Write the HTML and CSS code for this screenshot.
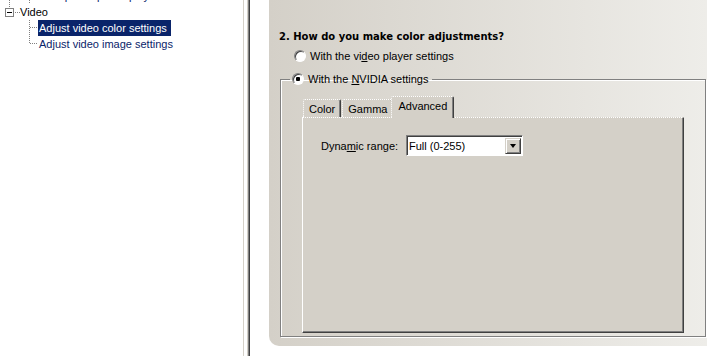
FILE: index.html
```html
<!DOCTYPE html>
<html lang="en">
<head>
    <meta charset="UTF-8">
    <title>NVIDIA Control Panel - Adjust video color settings</title>
    <link rel="stylesheet" href="styles.css">
</head>
<body>
    <div class="window">
        <!-- task tree on the left -->
        <div class="tree">
            <div class="tree-row">
                <span class="gutter"></span>
                <span class="branch"></span>
                <span class="tree-label">Set up multiple displays</span>
            </div>
            <div class="tree-row">
                <span class="expander"><span class="box"></span></span>
                <span class="tree-label root">Video</span>
            </div>
            <div class="tree-row child">
                <span class="branch"></span>
                <span class="tree-label selected">Adjust video color settings</span>
            </div>
            <div class="tree-row child">
                <span class="branch last"></span>
                <span class="tree-label">Adjust video image settings</span>
            </div>
        </div>

        <div class="splitter"></div>

        <!-- page content -->
        <div class="content">
            <div class="panel">
                <h2>2. How do you make color adjustments?</h2>
                <label class="radio first">
                    <span class="radio-box"></span>
                    <span>With the vi<u>d</u>eo player settings</span>
                </label>
                <fieldset class="group">
                    <legend>
                        <label class="radio">
                            <span class="radio-box checked"></span>
                            <span>With the <u>N</u>VIDIA settings</span>
                        </label>
                    </legend>
                    <div class="tabs">
                        <div class="tab">Color</div>
                        <div class="tab">Gamma</div>
                        <div class="tab active">Advanced</div>
                    </div>
                    <div class="tab-page">
                        <div class="field-row">
                            <span class="field-label">Dyna<u>m</u>ic range:</span>
                            <div class="select">
                                <span class="select-value">Full (0-255)</span>
                                <span class="select-button"><span class="arrow"></span></span>
                            </div>
                        </div>
                    </div>
                </fieldset>
            </div>
        </div>
    </div>
</body>
</html>
```

FILE: styles.css
```css
/* NVIDIA control panel, classic look */
html, body {
    margin: 0;
    padding: 0;
    background: #fff;
}

body {
    font-family: "Liberation Sans", Arial, sans-serif;
    font-size: 11px;
    color: #000;
}

.window {
    display: flex;
    width: 707px;
    height: 356px;
    overflow: hidden;
}

/* ---------- tree ---------- */
.tree {
    width: 243px;
    flex: none;
    margin-top: -12px;
}

.tree-row {
    display: flex;
    height: 16px;
    align-items: stretch;
}

.tree-row.child {
    padding-left: 29px;
}

.gutter {
    width: 29px;
    background: repeating-linear-gradient(to bottom, #808080 0 1px, transparent 1px 2px) 9px 0 / 1px 16px no-repeat;
}

.branch {
    width: 9px;
    flex: none;
    background:
        repeating-linear-gradient(to right, #808080 0 1px, transparent 1px 2px) 1px 7px / 8px 1px no-repeat,
        repeating-linear-gradient(to bottom, #808080 0 1px, transparent 1px 2px) 0 0 / 1px 16px no-repeat;
}

.branch.last {
    background:
        repeating-linear-gradient(to right, #808080 0 1px, transparent 1px 2px) 1px 7px / 8px 1px no-repeat,
        repeating-linear-gradient(to bottom, #808080 0 1px, transparent 1px 2px) 0 0 / 1px 8px no-repeat;
}

.expander {
    width: 20px;
    flex: none;
    display: flex;
    align-items: center;
    padding-left: 5px;
    box-sizing: border-box;
    background:
        repeating-linear-gradient(to bottom, #808080 0 1px, transparent 1px 2px) 9px 0 / 1px 4px no-repeat,
        repeating-linear-gradient(to right, #808080 0 1px, transparent 1px 2px) 15px 8px / 5px 1px no-repeat;
}

.box {
    width: 7px;
    height: 7px;
    border: 1px solid #808080;
    background: linear-gradient(#000, #000) center / 5px 1px no-repeat, #fff;
}

.tree-label {
    line-height: 16px;
    padding: 0 4px 0 1px;
    color: #0a246a;
    white-space: nowrap;
}

.tree-label.root {
    color: #000;
    padding-left: 0;
}

.tree-label.selected {
    background: #0a246a;
    color: #fff;
}

/* ---------- splitter ---------- */
.splitter {
    width: 7px;
    flex: none;
    background: linear-gradient(to right,
        #d4d0c8 0 1px, #fff 1px 4px, #d4d0c8 4px 5px, #808080 5px 6px, #404040 6px 7px);
}

/* ---------- content ---------- */
.content {
    flex: 1;
    padding: 0 0 10px 19px;
}

.panel {
    height: 100%;
    box-sizing: border-box;
    padding: 30px 0 0 10px;
    background: linear-gradient(to right, #d4d0c8, #eeede9);
    border-bottom-left-radius: 10px;
}

.panel h2 {
    margin: 0 0 5px 0;
    line-height: 14px;
    font-weight: bold;
    font-family: "DejaVu Sans", Verdana, sans-serif;
    font-size: 10px;
}

.radio {
    display: flex;
    align-items: center;
    height: 14px;
    white-space: nowrap;
}

.radio.first {
    margin-left: 15px;
}

.radio-box {
    width: 10px;
    height: 10px;
    flex: none;
    margin-right: 4px;
    border-radius: 50%;
    border: 1px solid;
    border-color: #808080 #fff #fff #808080;
    background: #fff;
    box-shadow: inset 1px 1px 0 #404040;
}

.radio-box.checked {
    background: radial-gradient(circle, #000 0 2px, #fff 2.5px);
}

.group {
    margin: 9px 1px 0 1px;
    padding: 10px 21px 4px 21px;
    border: 1px solid #808080;
    box-shadow: inset 1px 1px 0 #fff, 1px 1px 0 #fff;
    height: 265px;
    box-sizing: border-box;
}

.group legend {
    margin-left: -12px;
    padding: 0 4px 0 2px;
}

/* ---------- tabs ---------- */
.tabs {
    display: flex;
    align-items: flex-end;
    height: 21px;
    padding-left: 1px;
}

.tab {
    height: 17px;
    line-height: 18px;
    padding: 0 5px;
    background: #d4d0c8;
    border-top: 1px dotted #fff;
    border-left: 1px dotted #fff;
    border-right: 1px solid #404040;
    box-shadow: inset -1px 0 0 #808080;
    border-top-left-radius: 2px;
    border-top-right-radius: 2px;
}

.tab + .tab {
    margin-left: 1px;
}

.tab.active {
    height: 21px;
    line-height: 19px;
    margin: 0 0 -1px -2px;
    padding: 0 6px 0 6px;
    position: relative;
    z-index: 1;
}

.tab-page {
    height: 216px;
    box-sizing: border-box;
    background: #d4d0c8;
    border-top: 1px dotted #fff;
    border-left: 1px solid #fff;
    border-right: 1px solid #404040;
    border-bottom: 1px solid #404040;
    box-shadow: inset -1px -1px 0 #808080;
    padding: 17px 0 0 18px;
}

.field-row {
    display: flex;
    align-items: center;
}

.field-label {
    width: 85px;
}

.select {
    width: 117px;
    height: 21px;
    box-sizing: border-box;
    display: flex;
    align-items: center;
    justify-content: space-between;
    background: #fff;
    border: 1px solid;
    border-color: #808080 #fff #fff #808080;
    box-shadow: inset 1px 1px 0 #404040;
    padding: 1px 1px 0 2px;
}

.select-button {
    width: 16px;
    height: 16px;
    box-sizing: border-box;
    display: flex;
    align-items: center;
    justify-content: center;
    background: #d4d0c8;
    border: 1px solid;
    border-color: #d4d0c8 #404040 #404040 #d4d0c8;
    box-shadow: inset 1px 1px 0 #fff, inset -1px -1px 0 #808080;
}

.arrow {
    width: 0;
    height: 0;
    border-left: 3.5px solid transparent;
    border-right: 3.5px solid transparent;
    border-top: 4px solid #000;
}
```
